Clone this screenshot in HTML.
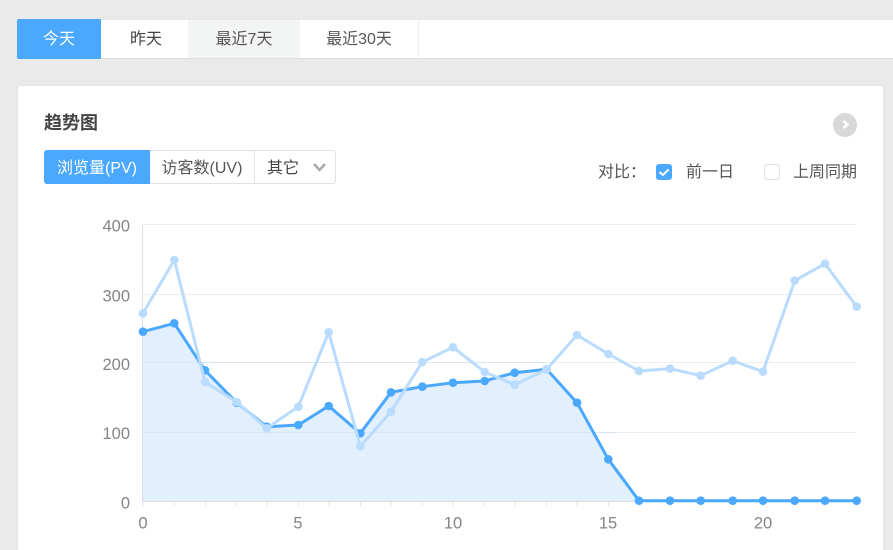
<!DOCTYPE html>
<html lang="zh">
<head>
<meta charset="utf-8">
<style>
html,body{margin:0;padding:0;width:893px;height:550px;overflow:hidden;background:#eaeaea;}
body{position:relative;font-family:"Liberation Sans","Noto Sans CJK SC",sans-serif;color:#555;}
#w{position:absolute;left:0;top:0;width:893px;height:550px;overflow:hidden;background:#eaeaea;filter:blur(.35px);}
.a{position:absolute;box-sizing:border-box;}
.t{position:absolute;white-space:nowrap;line-height:20px;font-size:16px;text-align:center;}
svg text{font-family:"Liberation Sans",sans-serif;font-size:16.5px;fill:#858585;}
</style>
</head>
<body>
<div id="w">
<div class="a" style="left:17px;top:19px;width:876px;height:40px;background:#fff;border-bottom:1px solid #e0e0e0;border-top:1px solid #e6e6e6;"></div>
<div class="a" style="left:17px;top:19px;width:84px;height:40px;background:#4ba8ff;border-radius:2px 0 0 2px;"></div>
<div class="a" style="left:188px;top:20px;width:112px;height:38px;background:#f3f4f4;"></div>
<div class="a" style="left:418px;top:20px;width:1px;height:38px;background:#eee;"></div>
<div class="t" style="left:17px;top:29.5px;width:84px;color:#fff;">今天</div>
<div class="t" style="left:102.5px;top:29.5px;width:87px;color:#444;">昨天</div>
<div class="t" style="left:188px;top:29.5px;width:112px;color:#555;">最近7天</div>
<div class="t" style="left:300px;top:29.5px;width:118px;color:#555;">最近30天</div>

<div class="a" style="left:18px;top:86px;width:865px;height:470px;background:#fff;border-radius:2px;box-shadow:0 0 2px #ddd;"></div>
<div class="t" style="left:44px;top:113px;font-size:18px;font-weight:bold;color:#444;">趋势图</div>
<div class="a" style="left:833px;top:112.5px;width:24px;height:24px;border-radius:50%;background:#d8d8d8;"></div>
<svg class="a" style="left:833px;top:112px;" width="24" height="24"><path d="M10.5 9 L14.5 12.5 L10.5 16" fill="none" stroke="#fff" stroke-width="2.6"/></svg>

<div class="a" style="left:44px;top:150px;width:292px;height:34px;border:1px solid #e2e2e2;border-radius:3px;background:#fff;"></div>
<div class="a" style="left:44px;top:150px;width:106px;height:34px;background:#4ba8ff;border-radius:3px 0 0 3px;"></div>
<div class="a" style="left:254px;top:150px;width:1px;height:34px;background:#e2e2e2;"></div>
<div class="t" style="left:44px;top:158.5px;width:106px;color:#fff;">浏览量(PV)</div>
<div class="t" style="left:150px;top:158.5px;width:104px;color:#555;">访客数(UV)</div>
<div class="t" style="left:267px;top:158.5px;color:#444;">其它</div>
<svg class="a" style="left:312px;top:160px;" width="16" height="14"><path d="M2 4 L7.5 10 L13 4" fill="none" stroke="#aaa" stroke-width="2.6"/></svg>

<div class="t" style="left:598px;top:163px;color:#555;">对比：</div>
<div class="a" style="left:656px;top:164px;width:16px;height:16px;border-radius:3px;background:#4ba8ff;"></div>
<svg class="a" style="left:656px;top:164px;" width="16" height="16"><path d="M3.5 8 L7 11 L12.5 5.5" fill="none" stroke="#fff" stroke-width="2"/></svg>
<div class="t" style="left:686px;top:163px;color:#555;">前一日</div>
<div class="a" style="left:764px;top:164px;width:16px;height:16px;border-radius:3px;border:1px solid #e2e2e2;background:#fff;"></div>
<div class="t" style="left:793px;top:163px;color:#555;">上周同期</div>

<svg class="a" style="left:0;top:0;" width="893" height="550">
<g stroke="#eeeeee" stroke-width="1">
<path d="M143 224.5H857M143 294.5H857M143 362.5H857M143 432.5H857"/>
</g>
<polygon fill="#e2effc" points="143,331.7 174.3,323.3 205,370.3 236.7,402.7 266.7,426.7 298.3,425 328.7,406 360.3,433.3 391,392.3 422.3,386.7 453,382.7 484.7,381 514.7,372.7 546.7,369.3 577,402.7 608.3,459.3 639,501 143,501"/>
<path d="M143 362.5H546M143 432.5H616" stroke="#d9e5f0" stroke-width="1" fill="none"/>
<path d="M142.5 224V502M143 501.5H857" stroke="#dedee4" stroke-width="1" fill="none"/>
<path d="M143 502v4M174.5 502v4M205.5 502v4M236.5 502v4M267 502v4M298.5 502v4M329 502v4M360.5 502v4M391 502v4M422.5 502v4M453 502v4M484.5 502v4M515 502v4M546.5 502v4M577 502v4M608.5 502v4M639 502v4M670 502v4M701 502v4M732.5 502v4M763 502v4M794.5 502v4M825 502v4M856.5 502v4" stroke="#e6e6e6" stroke-width="1"/>

<polyline fill="none" stroke="#4ba8ff" stroke-width="3" points="143,331.7 174.3,323.3 205,370.3 236.7,402.7 266.7,426.7 298.3,425 328.7,406 360.3,433.3 391,392.3 422.3,386.7 453,382.7 484.7,381 514.7,372.7 546.7,369.3 577,402.7 608.3,459.3 639,500.7 670,500.7 700.7,500.7 732.7,500.7 763,500.7 794.7,500.7 825,500.7 856.7,500.7"/>
<g fill="#4ba8ff">
<circle cx="143" cy="331.7" r="4.3"/><circle cx="174.3" cy="323.3" r="4.3"/><circle cx="205" cy="370.3" r="4.3"/><circle cx="236.7" cy="402.7" r="4.3"/><circle cx="266.7" cy="426.7" r="4.3"/><circle cx="298.3" cy="425" r="4.3"/><circle cx="328.7" cy="406" r="4.3"/><circle cx="360.3" cy="433.3" r="4.3"/><circle cx="391" cy="392.3" r="4.3"/><circle cx="422.3" cy="386.7" r="4.3"/><circle cx="453" cy="382.7" r="4.3"/><circle cx="484.7" cy="381" r="4.3"/><circle cx="514.7" cy="372.7" r="4.3"/><circle cx="546.7" cy="369.3" r="4.3"/><circle cx="577" cy="402.7" r="4.3"/><circle cx="608.3" cy="459.3" r="4.3"/><circle cx="639" cy="500.7" r="4.3"/><circle cx="670" cy="500.7" r="4.3"/><circle cx="700.7" cy="500.7" r="4.3"/><circle cx="732.7" cy="500.7" r="4.3"/><circle cx="763" cy="500.7" r="4.3"/><circle cx="794.7" cy="500.7" r="4.3"/><circle cx="825" cy="500.7" r="4.3"/><circle cx="856.7" cy="500.7" r="4.3"/>
</g>

<polyline fill="none" stroke="#b9dcfe" stroke-width="3" points="143,313.3 174.3,260 205,382 236.7,402 266.7,428.3 298.3,406.7 328.7,332.3 360.3,446.3 391,411.7 422.3,362 453,347.3 484.7,372 514.7,384.7 546.7,369.3 577,335 608.3,354 639,371 670,368.7 700.7,375.7 732.7,360.7 763,371.7 794.7,280.7 825,263.7 856.7,306.7"/>
<g fill="#b9dcfe">
<circle cx="143" cy="313.3" r="4.3"/><circle cx="174.3" cy="260" r="4.3"/><circle cx="205" cy="382" r="4.3"/><circle cx="236.7" cy="402" r="4.3"/><circle cx="266.7" cy="428.3" r="4.3"/><circle cx="298.3" cy="406.7" r="4.3"/><circle cx="328.7" cy="332.3" r="4.3"/><circle cx="360.3" cy="446.3" r="4.3"/><circle cx="391" cy="411.7" r="4.3"/><circle cx="422.3" cy="362" r="4.3"/><circle cx="453" cy="347.3" r="4.3"/><circle cx="484.7" cy="372" r="4.3"/><circle cx="514.7" cy="384.7" r="4.3"/><circle cx="546.7" cy="369.3" r="4.3"/><circle cx="577" cy="335" r="4.3"/><circle cx="608.3" cy="354" r="4.3"/><circle cx="639" cy="371" r="4.3"/><circle cx="670" cy="368.7" r="4.3"/><circle cx="700.7" cy="375.7" r="4.3"/><circle cx="732.7" cy="360.7" r="4.3"/><circle cx="763" cy="371.7" r="4.3"/><circle cx="794.7" cy="280.7" r="4.3"/><circle cx="825" cy="263.7" r="4.3"/><circle cx="856.7" cy="306.7" r="4.3"/>
</g>

<g text-anchor="end">
<text x="130" y="231.5">400</text><text x="130" y="301.5">300</text><text x="130" y="370">200</text><text x="130" y="439">100</text><text x="130" y="508.5">0</text>
</g>
<g text-anchor="middle">
<text x="143" y="528.5">0</text><text x="298" y="528.5">5</text><text x="453" y="528.5">10</text><text x="608" y="528.5">15</text><text x="763" y="528.5">20</text>
</g>
</svg>
</div>
</body>
</html>
